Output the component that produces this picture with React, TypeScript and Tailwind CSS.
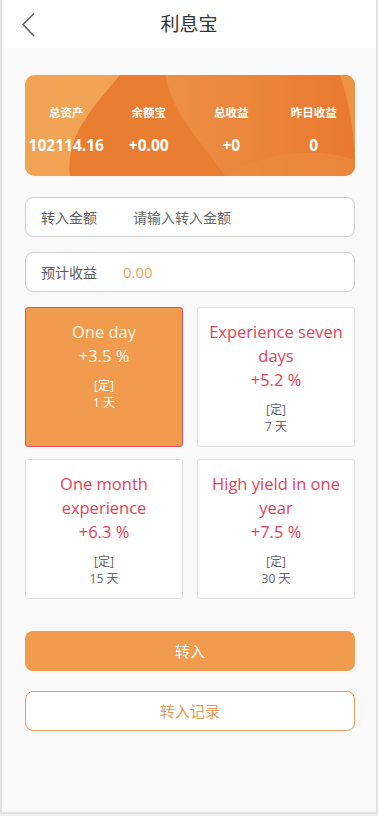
import React from "react";

const stats = [
  { label: "总资产", value: "102114.16" },
  { label: "余额宝", value: "+0.00" },
  { label: "总收益", value: "+0" },
  { label: "昨日收益", value: "0" },
];

const plans = [
  { title: "One day", rate: "+3.5 %", days: "1 天", active: true },
  { title: "Experience seven days", rate: "+5.2 %", days: "7 天" },
  { title: "One month experience", rate: "+6.3 %", days: "15 天" },
  { title: "High yield in one year", rate: "+7.5 %", days: "30 天" },
];

const font = "font-['Open_Sans','Noto_Sans_CJK_SC',sans-serif]";

export default function App() {
  return (
    <div className={`h-[816px] w-[378px] bg-[#efefef] ${font}`}>
      <div className="flex h-[814px] flex-col border-x-2 border-b-2 border-[#e2e2e2] bg-[#f9f9f9]">
        {/* header */}
        <header className="relative flex h-[48px] shrink-0 items-center justify-center bg-white">
          <svg
            className="absolute left-[18px] top-[12px]"
            width="16"
            height="26"
            viewBox="0 0 16 26"
            fill="none"
            aria-hidden
          >
            <path d="M14 1.5 3 12.5 14 24" stroke="#666" strokeWidth="1.6" />
          </svg>
          <h1 className="text-[19px] text-[#333]">利息宝</h1>
        </header>

        <main className="flex flex-col pl-[23px] pr-[21px] pt-[27px]">
          {/* summary card */}
          <div className="relative h-[101px] overflow-hidden rounded-[10px] bg-gradient-to-r from-[#f0a052] to-[#e8792f]">
            <svg
              className="absolute inset-0 h-full w-full"
              viewBox="0 0 330 101"
              preserveAspectRatio="none"
              aria-hidden
            >
              <path
                d="M0 0 H95 C70 30 40 60 45 101 H0 Z"
                fill="#f2a556"
                opacity="0.85"
              />
              <path
                d="M95 0 C70 30 40 60 45 101 H200 C180 70 150 45 140 0 Z"
                fill="#e97e33"
              />
              <path
                d="M315 0 C325 30 330 60 330 101 V0 Z"
                fill="#ee9243"
              />
              <path
                d="M200 101 C230 80 290 70 330 85 V101 Z"
                fill="#eb8a3d"
                opacity="0.7"
              />
            </svg>
            <div className="relative grid h-full grid-cols-4 content-center pt-[8px] text-center text-white">
              {stats.map((s) => (
                <div key={s.label} className="flex flex-col items-center">
                  <span className="text-[11.5px] font-semibold leading-[16px]">{s.label}</span>
                  <span className="mt-[14px] text-[15.5px] font-bold leading-[20px]">{s.value}</span>
                </div>
              ))}
            </div>
          </div>

          {/* inputs */}
          <div className="mt-[21px] flex h-[40px] items-center rounded-[8px] border border-[#cfcfcf] bg-white px-[15px] text-[14px] text-[#5c5c5c]">
            <span className="w-[92px]">转入金额</span>
            <span className="text-[#666]">请输入转入金额</span>
          </div>
          <div className="mt-[15px] flex h-[40px] items-center rounded-[8px] border border-[#cfcfcf] bg-white px-[15px] text-[14px] text-[#5c5c5c]">
            <span className="w-[82px]">预计收益</span>
            <span className="text-[15px] text-[#eba35c]">0.00</span>
          </div>

          {/* plans */}
          <div className="mt-[15px] grid grid-cols-2 gap-x-[14px] gap-y-[12px]">
            {plans.map((p) => (
              <div
                key={p.title}
                className={
                  p.active
                    ? "flex h-[140px] flex-col items-center rounded-[3px] border border-[#e0505c] bg-[#f09b4d] px-[8px] pt-[12px] text-center text-white"
                    : "flex h-[140px] flex-col items-center rounded-[3px] border border-[#e2e2e2] bg-white px-[8px] pt-[12px] text-center"
                }
              >
                <div className={p.active ? "text-[16.5px] leading-[24px] text-[#fff5e8]" : "text-[16.5px] leading-[24px] text-[#e4445a]"}>
                  {p.title}
                </div>
                <div className={p.active ? "text-[16.5px] leading-[24px] text-[#fff5e8]" : "text-[16.5px] leading-[24px] text-[#e4445a]"}>
                  {p.rate}
                </div>
                <div className={p.active ? "mt-[10px] text-[12px] leading-[16px] text-white" : "mt-[10px] text-[12px] leading-[16px] text-[#666]"}>
                  [定]
                </div>
                <div className={p.active ? "text-[12px] leading-[17px] text-white" : "text-[12px] leading-[17px] text-[#666]"}>
                  {p.days}
                </div>
              </div>
            ))}
          </div>

          {/* buttons */}
          <button className="mt-[32px] h-[40px] rounded-[8px] bg-[#f09b4d] text-[15px] text-white">
            转入
          </button>
          <button className="mt-[20px] h-[40px] rounded-[8px] border border-[#e5a05c] bg-white text-[15px] text-[#e39a52]">
            转入记录
          </button>
        </main>
      </div>
    </div>
  );
}
